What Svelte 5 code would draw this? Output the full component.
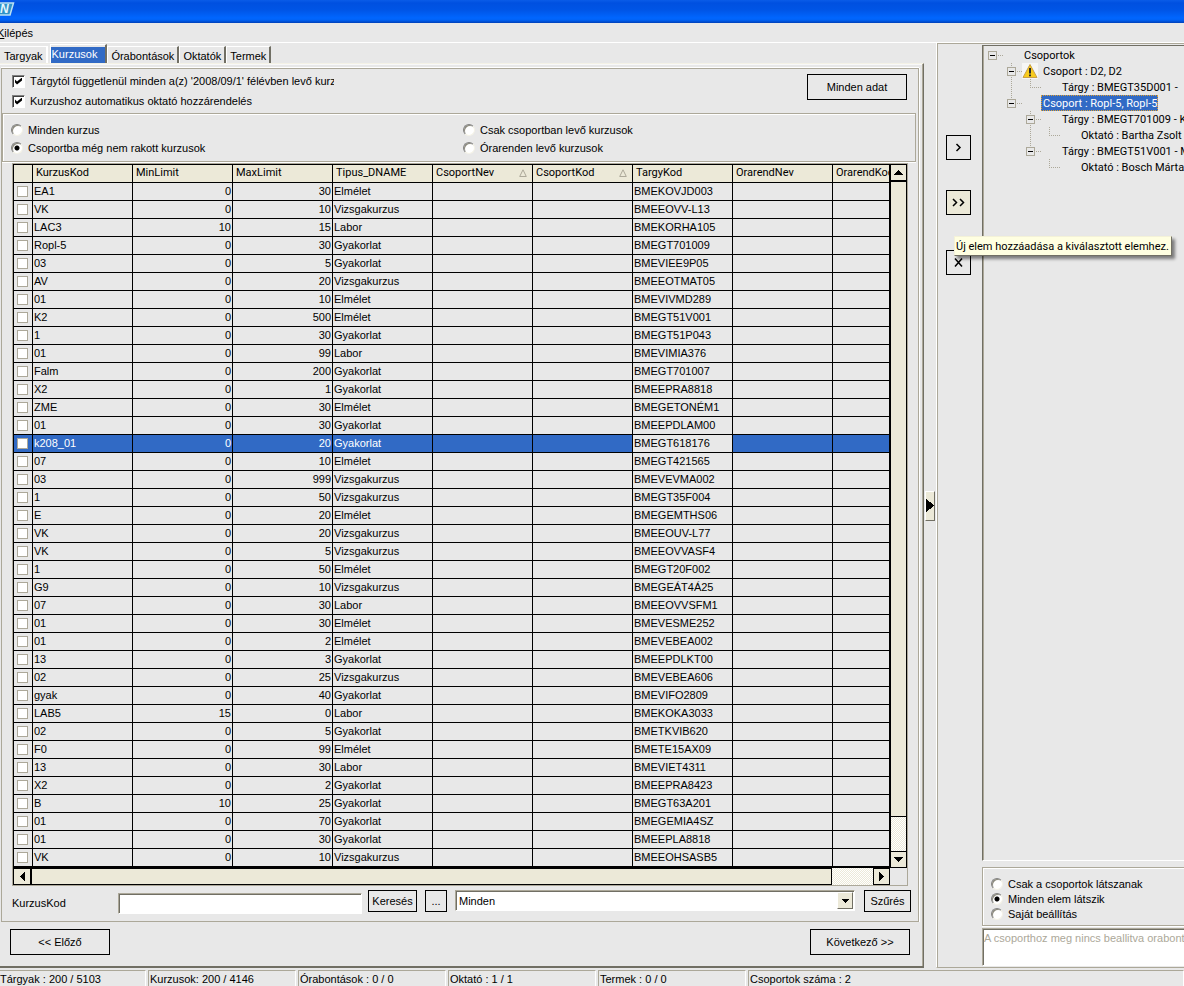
<script>
  const tabs = ['Targyak', 'Kurzusok', 'Órabontások', 'Oktatók', 'Termek'];
  const columns = ['KurzusKod', 'MinLimit', 'MaxLimit', 'Tipus_DNAME', 'CsoportNev', 'CsoportKod', 'TargyKod', 'OrarendNev', 'OrarendKod'];
  const sorted = ['CsoportNev', 'CsoportKod'];
  const E = 'Elmélet', V = 'Vizsgakurzus', L = 'Labor', G = 'Gyakorlat';
  const rows = [
    ['EA1', 0, 30, E, 'BMEKOVJD003'], ['VK', 0, 10, V, 'BMEEOVV-L13'], ['LAC3', 10, 15, L, 'BMEKORHA105'],
    ['Ropl-5', 0, 30, G, 'BMEGT701009'], ['03', 0, 5, G, 'BMEVIEE9P05'], ['AV', 0, 20, V, 'BMEEOTMAT05'],
    ['01', 0, 10, E, 'BMEVIVMD289'], ['K2', 0, 500, E, 'BMEGT51V001'], ['1', 0, 30, G, 'BMEGT51P043'],
    ['01', 0, 99, L, 'BMEVIMIA376'], ['Falm', 0, 200, G, 'BMEGT701007'], ['X2', 0, 1, G, 'BMEEPRA8818'],
    ['ZME', 0, 30, E, 'BMEGETONÉM1'], ['01', 0, 30, G, 'BMEEPDLAM00'], ['k208_01', 0, 20, G, 'BMEGT618176'],
    ['07', 0, 10, E, 'BMEGT421565'], ['03', 0, 999, V, 'BMEVEVMA002'], ['1', 0, 50, V, 'BMEGT35F004'],
    ['E', 0, 20, E, 'BMEGEMTHS06'], ['VK', 0, 20, V, 'BMEEOUV-L77'], ['VK', 0, 5, V, 'BMEEOVVASF4'],
    ['1', 0, 50, E, 'BMEGT20F002'], ['G9', 0, 10, V, 'BMEGEÁT4Á25'], ['07', 0, 30, L, 'BMEEOVVSFM1'],
    ['01', 0, 30, E, 'BMEVESME252'], ['01', 0, 2, E, 'BMEVEBEA002'], ['13', 0, 3, G, 'BMEEPDLKT00'],
    ['02', 0, 25, V, 'BMEVEBEA606'], ['gyak', 0, 40, G, 'BMEVIFO2809'], ['LAB5', 15, 0, L, 'BMEKOKA3033'],
    ['02', 0, 5, G, 'BMETKVIB620'], ['F0', 0, 99, E, 'BMETE15AX09'], ['13', 0, 30, L, 'BMEVIET4311'],
    ['X2', 0, 2, G, 'BMEEPRA8423'], ['B', 10, 25, G, 'BMEGT63A201'], ['01', 0, 70, G, 'BMEGEMIA4SZ'],
    ['01', 0, 30, G, 'BMEEPLA8818'], ['VK', 0, 10, V, 'BMEEOHSASB5']
  ];
  const selectedRow = 14;
  // guide: vertical dotted segments as [x, y1, y2] inside a 16px row
  const tree = [
    { level: 0, text: 'Csoportok', box: true, guide: [] },
    { level: 1, text: 'Csoport : D2, D2', box: true, warn: true, guide: [[28, 0, 16]] },
    { level: 2, text: 'Tárgy : BMEGT35D001 -', guide: [[28, 0, 16], [47, 0, 8]] },
    { level: 1, text: 'Csoport : Ropl-5, Ropl-5', box: true, selected: true, guide: [[28, 0, 8]] },
    { level: 2, text: 'Tárgy : BMEGT701009 - K', box: true, guide: [[47, 0, 16]] },
    { level: 3, text: 'Oktató : Bartha Zsolt (', guide: [[47, 0, 16], [66, 0, 8]] },
    { level: 2, text: 'Tárgy : BMEGT51V001 - M', box: true, guide: [[47, 0, 8]] },
    { level: 3, text: 'Oktató : Bosch Márta', guide: [[66, 0, 8]] }
  ];
  const courseFilters = ['Minden kurzus', 'Csak csoportban levő kurzusok', 'Csoportba még nem rakott kurzusok', 'Órarenden levő kurzusok'];
  const treeFilters = ['Csak a csoportok látszanak', 'Minden elem látszik', 'Saját beállítás'];
  const status = ['Tárgyak : 200 / 5103', 'Kurzusok: 200 / 4146', 'Órabontások : 0 / 0', 'Oktató : 1 / 1', 'Termek : 0 / 0', 'Csoportok száma : 2'];
</script>

{#snippet arrow(points)}
  <svg width="9" height="9" viewBox="0 0 9 9" shape-rendering="crispEdges" aria-hidden="true"><polygon {points} fill="#000" /></svg>
{/snippet}

<div class="app">
  <header class="title">
    <svg width="15" height="18" viewBox="0 0 15 18" aria-hidden="true">
      <path d="M0 3H13.5L10 15H0Z" fill="#2f93c8" />
      <path d="M0 3H13.5L10 15H0" fill="none" stroke="#b9e0f4" stroke-width="1.5" />
      <text x="0" y="13" font-family="Liberation Sans" font-size="12" font-weight="bold" font-style="italic" fill="#e8f8ff">N</text>
    </svg>
  </header>
  <nav class="menu"><button type="button"><u>K</u>ilépés</button></nav>

  <main class="work">
    <section class="left">
      <div class="tabs" role="tablist">
        {#each tabs as tab, i}
          <button type="button" role="tab" aria-selected={i === 1} class:active={i === 1}>{tab}</button>
        {/each}
      </div>
      <div class="page">
        <div class="group">
          <div class="top">
            <div class="checks">
              <label><input type="checkbox" class="check" checked /><span>Tárgytól függetlenül minden a(z) '2008/09/1' félévben levő kurzus</span></label>
              <label><input type="checkbox" class="check" checked /><span>Kurzushoz automatikus oktató hozzárendelés</span></label>
            </div>
            <button type="button" class="btn wide">Minden adat</button>
          </div>
          <fieldset class="radios">
            {#each courseFilters as f, i}
              <label><input type="radio" name="course" checked={i === 2} /><span>{f}</span></label>
            {/each}
          </fieldset>

          <div class="grid">
            <div class="view">
              <table>
                <colgroup><col class="pick" />{#each columns as c}<col class="data" />{/each}</colgroup>
                <thead>
                  <tr>
                    <th></th>
                    {#each columns as c}
                      <th scope="col"><div class="head"><span>{c}</span>
                        {#if sorted.includes(c)}<svg width="8" height="8" viewBox="0 0 8 8" aria-hidden="true"><path d="M4 .8L7.3 7.5H.7Z" fill="none" stroke="#aca899" /></svg>{/if}
                      </div></th>
                    {/each}
                  </tr>
                </thead>
                <tbody>
                  {#each rows as r, i}
                    <tr class:selected={i === selectedRow}>
                      <td class="tick"><input type="checkbox" aria-label={r[0]} /></td>
                      <td>{r[0]}</td><td class="num">{r[1]}</td><td class="num">{r[2]}</td><td>{r[3]}</td>
                      <td></td><td></td><td class="focus">{r[4]}</td><td></td><td></td>
                    </tr>
                  {/each}
                </tbody>
              </table>
            </div>
            <div class="vbar">
              <button type="button" aria-label="Fel">{@render arrow('4,2 5,2 9,7 0,7')}</button>
              <div class="thumb"></div>
              <div class="track"></div>
              <button type="button" aria-label="Le">{@render arrow('0,2 9,2 5,7 4,7')}</button>
            </div>
            <div class="hbar">
              <button type="button" aria-label="Balra">{@render arrow('2,4 2,5 7,9 7,0')}</button>
              <div class="thumb"></div>
              <div class="track"></div>
              <button type="button" aria-label="Jobbra">{@render arrow('2,0 7,4 7,5 2,9')}</button>
            </div>
          </div>

          <div class="filter">
            <div class="search">
              <label for="code">KurzusKod</label>
              <input id="code" type="text" />
            </div>
            <button type="button" class="btn find">Keresés</button>
            <button type="button" class="btn dots">...</button>
            <div class="combo">
              <select aria-label="Szűrő"><option>Minden</option></select>
              <span class="drop">{@render arrow('1,3 8,3 5,7 4,7')}</span>
            </div>
            <button type="button" class="btn apply">Szűrés</button>
          </div>
        </div>
        <div class="steps">
          <button type="button" class="btn wide">&lt;&lt; Előző</button>
          <button type="button" class="btn wide">Következő &gt;&gt;</button>
        </div>
      </div>
    </section>

    <div class="splitter">
      <button type="button" aria-label="Panel"><svg width="8" height="13" viewBox="0 0 8 13" shape-rendering="crispEdges"><polygon points="0,0 8,6 8,7 0,13" /></svg></button>
    </div>

    <section class="right">
      <div class="actions">
        <button type="button" class="btn square" aria-label="Hozzáadás"><svg width="9" height="9" viewBox="0 0 9 9"><path d="M2.5 1L6 4.5L2.5 8" /></svg></button>
        <div class="hinted">
          <button type="button" class="btn square hot" aria-describedby="hint" aria-label="Összes hozzáadása"><svg width="13" height="9" viewBox="0 0 13 9"><path d="M1 1L4.5 4.5L1 8M8 1L11.5 4.5L8 8" /></svg></button>
          <div class="hint" id="hint" role="tooltip">Új elem hozzáadása a kiválasztott elemhez.</div>
        </div>
        <button type="button" class="btn square remove" aria-label="Törlés"><svg width="9" height="9" viewBox="0 0 9 9"><path d="M1 .5L8 8.5M8 .5L1 8.5" /></svg></button>
      </div>
      <div class="side">
        <ul class="tree" role="tree">
          {#each tree as n}
            {@const cx = 9 + 19 * n.level}
            <li role="treeitem" aria-selected={!!n.selected}>
              <svg width={39 + 19 * n.level} height="16" shape-rendering="crispEdges" aria-hidden="true">
                {#each n.guide as g}
                  <line x1={g[0] + 0.5} x2={g[0] + 0.5} y1={g[1]} y2={g[2]} stroke="#aca899" stroke-dasharray="1 1" />
                {/each}
                <line x1={cx} x2={cx + 11} y1="8.5" y2="8.5" stroke="#aca899" stroke-dasharray="1 1" />
                {#if n.box}
                  <rect x={cx - 3.5} y="4.5" width="8" height="8" fill="#e8e8e8" stroke="#aca899" />
                  <rect x={cx - 2} y="8" width="5" height="1" fill="#000" />
                {/if}
                {#if n.warn}
                  <g shape-rendering="auto" transform={`translate(${cx + 11} 0)`}>
                    <rect width="16" height="16" fill="#f6f6f6" />
                    <path d="M8 1.5L15 14.5H1Z" fill="#f9cc1c" stroke="#c8a04a" stroke-linejoin="round" />
                    <path d="M8 5V10.5M8 11.5V13.2" stroke="#2b2b2b" stroke-width="2" />
                  </g>
                {/if}
              </svg>
              <span class:chosen={n.selected}>{n.text}</span>
            </li>
          {/each}
        </ul>
        <fieldset class="options">
          {#each treeFilters as f, i}
            <label><input type="radio" name="tree" checked={i === 1} /><span>{f}</span></label>
          {/each}
        </fieldset>
        <textarea aria-label="Üzenet" wrap="off" disabled value="A csoporthoz meg nincs beallitva orabontas"></textarea>
      </div>
    </section>
  </main>

  <footer class="status">
    {#each status as s}<div>{s}</div>{/each}
  </footer>
</div>

<style>
  :global(body) { margin: 0; background: #e8e8e8; overflow: hidden; }
  .app, .app * { box-sizing: border-box; }
  .app { font: 11px/14px "Liberation Sans", Arial, sans-serif; color: #000; background: #e8e8e8; display: flex; flex-direction: column; min-height: 100vh; white-space: nowrap; }
  button, input, select, textarea { font: inherit; color: inherit; margin: 0; padding: 0; border-radius: 0; }
  button { background: #e8e8e8; border: 0; display: flex; align-items: center; justify-content: center; flex: none; }
  svg { display: block; flex: none; }

  .title { height: 23px; background: linear-gradient(#0a5ce8 0, #0050e0 3px, #0055e6 10px, #0066ff 18px, #0062f6 20px, #0040b8 23px); }
  .menu { height: 20px; border-bottom: 1px solid #fff; display: flex; align-items: center; overflow: hidden; }
  .menu button { margin-left: -3px; }

  .work { flex: 1; display: flex; align-items: stretch; }
  .left { flex: 1; min-width: 0; display: flex; flex-direction: column; }
  .tabs { display: flex; align-items: flex-end; height: 20px; }
  .tabs button { height: 17px; padding: 2px 3px 0; border-top: 1px solid #fff; border-left: 1px solid #fff; border-right: 2px solid #716f64; }
  .tabs button:first-child { padding-left: 4px; border-right-color: #fff; border-left: 0; margin-right: 2px; }
  .tabs button.active { height: 19px; padding: 0 8px 0 1px; background: linear-gradient(#e8e8e8 2px, #316ac5 2px); color: #fff; }
  .page { flex: 1; border-top: 1px solid #f4f2e6; border-right: 1px solid #716f64; border-bottom: 2px solid #716f64; box-shadow: inset -1px 0 #aca899, inset 0 1px #f8f8f8; padding: 4px 4px 0 1px; display: flex; flex-direction: column; }
  .group { border: 1px solid #aca899; box-shadow: 0 -1px #fff, 1px 0 #fff; }
  .top { display: flex; justify-content: space-between; align-items: flex-start; padding: 2px 11px 2px 10px; }
  .top .btn { margin-top: 3px; }
  .checks { width: 322px; overflow: hidden; }
  .checks label { height: 20px; display: flex; align-items: center; gap: 5px; }
  fieldset { margin: 0; padding: 0; border: 1px solid #aca899; box-shadow: inset 1px 1px #fff, 0 1px #fff; min-width: 0; }
  label span { line-height: 14px; }
  .radios { display: grid; grid-template-columns: 1fr 1fr; padding: 7px 0 4px 8px; margin: 0 2px 1px 0; }
  .radios label { height: 18px; display: flex; align-items: center; gap: 5px; }

  input[type="checkbox"], input[type="radio"] { appearance: none; flex: none; background: #fff; }
  .check { width: 13px; height: 13px; border: 1px solid; border-color: #808080 #fff #fff #808080; box-shadow: inset 1px 1px #404040; position: relative; }
  .check:checked::after { content: ""; position: absolute; left: 2px; top: 2px; width: 7px; height: 7px; background: #000; clip-path: polygon(0 2px, 2px 4px, 7px 0, 7px 3px, 2px 7px, 0 5px); }
  input[type="radio"] { width: 12px; height: 12px; border-radius: 50%; border: 1px solid; border-color: #808080 #f4f2e6 #f4f2e6 #808080; box-shadow: inset 1px 1px #8c8a7c; }
  input[type="radio"]:checked { background: radial-gradient(circle, #000 2px, #fff 3px); }

  .btn { height: 26px; border: 1px solid #000; }
  .wide { width: 100px; }

  .grid { margin: 0 10px; border: 1px solid #aca899; display: grid; grid-template-columns: minmax(0, 1fr) 17px; grid-template-rows: auto 17px; }
  .view { overflow: hidden; border: 1px solid #000; }
  table { table-layout: fixed; width: 919px; border-collapse: separate; border-spacing: 0; }
  .pick { width: 19px; }
  .data { width: 100px; }
  th, td { height: 18px; padding: 0 1px 1px; border-right: 1px solid #000; border-bottom: 1px solid #000; text-align: left; font-weight: normal; overflow: hidden; line-height: 16px; }
  th { background: #ece9d8; padding: 0 5px 1px 3px; }
  .head { display: flex; align-items: center; justify-content: space-between; }
  .num { text-align: right; }
  .tick { padding: 0 0 0 3px; }
  .tick input { display: block; width: 11px; height: 11px; border: 1px solid #aca899; }
  .selected td { background: #316ac5; color: #fff; }
  .selected .focus { background: #e8e8e8; color: #000; }
  .vbar { display: flex; flex-direction: column; border-left: 1px solid #000; border-right: 1px solid #000; }
  .hbar { display: flex; border-left: 1px solid #000; }
  .vbar button, .hbar button { background: #ece9d8; }
  .vbar button { height: 17px; border-top: 1px solid #000; border-bottom: 1px solid #000; }
  .hbar button { width: 17px; border: 1px solid #000; border-left: 0; }
  .hbar button:last-child { border-left: 1px solid #000; }
  .thumb { background: #ece9d8; }
  .vbar .thumb { flex: 635 0 0; border: solid #000; border-width: 1px 0; }
  .vbar .track { flex: 34 0 0; }
  .hbar .thumb { flex: 801 0 0; border: 1px solid #000; }
  .hbar .track { flex: 41 0 0; }
  .track { background: repeating-conic-gradient(#ece9d8 0 25%, #fff 0 50%) 0 0 / 2px 2px; }

  .filter { display: flex; align-items: flex-start; padding: 4px 7px 5px 10px; }
  .search { display: flex; align-items: center; height: 26px; }
  .search label { width: 106px; }
  .search input { width: 244px; height: 21px; padding: 0 3px; background: #fff; border: 1px solid; border-color: #aca899 #fff #fff #aca899; box-shadow: inset 1px 1px #716f64; }
  .filter .btn { height: 22px; }
  .find { width: 49px; margin: 0 8px 0 6px; }
  .dots { width: 22px; margin-right: 8px; }
  .combo { position: relative; flex: 1; height: 21px; margin-right: 9px; }
  .combo select { appearance: none; width: 100%; height: 100%; padding: 0 20px 0 3px; background: #fff; border: 1px solid; border-color: #aca899 #fff #fff #aca899; box-shadow: inset 1px 1px #716f64; }
  .drop { position: absolute; right: 2px; top: 2px; bottom: 2px; width: 16px; display: flex; align-items: center; justify-content: center; background: #ece9d8; border: 1px solid; border-color: #fff #716f64 #716f64 #fff; pointer-events: none; }
  .apply { width: 47px; }
  .steps { display: flex; justify-content: space-between; padding: 7px 9px 11px; }

  .splitter { width: 12px; display: flex; align-items: center; justify-content: center; flex: none; }
  .splitter button { width: 10px; height: 30px; background: #ece9d8; border: 1px solid; border-color: #fff #716f64 #716f64 #fff; }

  .right { width: 248px; flex: none; display: flex; border-left: 1px solid #fff; border-bottom: 1px solid #aca899; box-shadow: inset 1px 1px #aca899; padding: 2px 0 1px 1px; }
  .actions { width: 44px; flex: none; padding: 90px 0 0 8px; display: flex; flex-direction: column; align-items: flex-start; gap: 30px; }
  .square { width: 25px; height: 25px; }
  .remove { margin-top: 5px; }
  .square path { fill: none; stroke: #000; stroke-width: 1.5; }
  .hot { background: #ece9d8; }
  .hinted { position: relative; }
  .tree, .hint, th { font-family: Roboto, "Liberation Sans", sans-serif; }
  .hint { position: absolute; z-index: 2; left: 8px; top: 46px; height: 20px; padding: 3px 2px 1px 1px; background: #ffffe1; border: 1px solid; border-color: #f4f2d8 #716f64 #716f64 #f4f2d8; box-shadow: 3px 3px 3px #0007; }
  .side { flex: 1; min-width: 0; display: flex; flex-direction: column; }
  .tree { flex: 1; margin: 0 0 6px; padding: 1px 0 0; list-style: none; overflow: hidden; border-left: 1px solid #716f64; border-top: 1px solid #716f64; border-bottom: 1px solid #fff; box-shadow: inset 1px 0 #aca899; }
  .tree li { display: flex; height: 16px; align-items: center; }
  .tree span { padding: 1px 1px 0 2px; line-height: 15px; }
  .tree .chosen { background: #316ac5; color: #fff; outline: 1px dotted #e0a030; outline-offset: -1px; }
  .options { padding: 8px 8px 4px; border-right: 0; }
  .options label { display: flex; align-items: center; gap: 5px; height: 15px; }
  textarea { display: block; width: 100%; height: 38px; margin-top: 2px; padding: 2px 0 0 1px; resize: none; overflow: hidden; background: #fff; color: #aca899; border: 1px solid; border-color: #aca899 #fff #fff #aca899; border-right: 0; box-shadow: inset 1px 1px #716f64; }

  .status { display: flex; gap: 2px; height: 19px; padding-top: 2px; margin-left: -2px; overflow: hidden; }
  .status div { width: 148px; flex: none; padding: 1px 0 0 1px; border-top: 1px solid #aca899; border-left: 1px solid #aca899; border-right: 1px solid #fff; }
  .status div:last-child { flex: 1; }
</style>
